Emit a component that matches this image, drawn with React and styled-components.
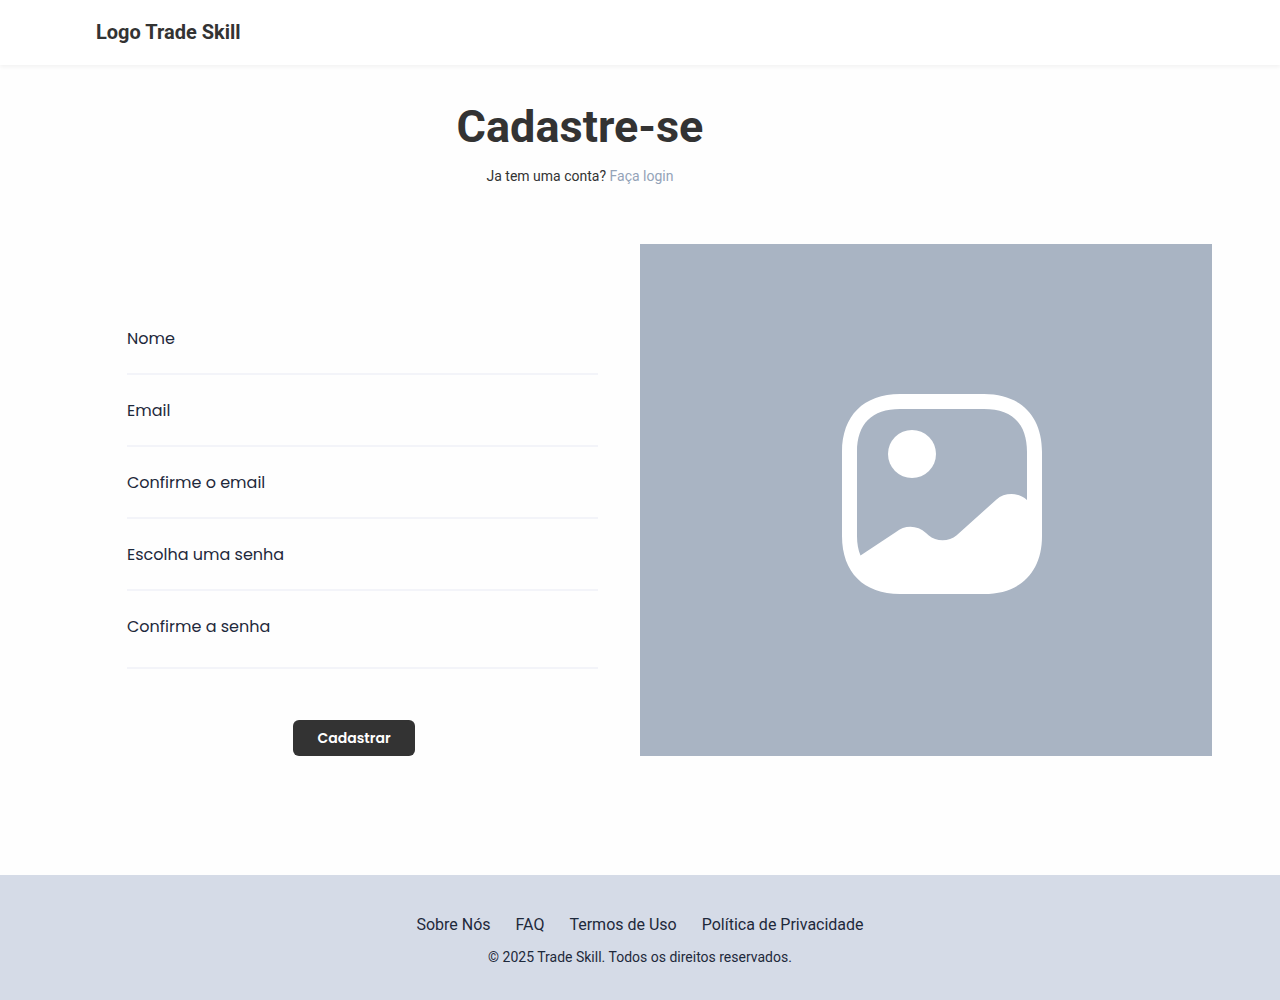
import React from "react";
import styled, { createGlobalStyle } from "styled-components";

const GlobalStyle = createGlobalStyle`
  *, *::before, *::after { box-sizing: border-box; }
  body {
    margin: 0;
    background: #fefefe;
    color: #333333;
    font-family: Roboto, "Liberation Sans", sans-serif;
  }
`;

const Page = styled.div`
  min-height: 100vh;
  display: flex;
  flex-direction: column;
`;

const Header = styled.header`
  padding: 20px 96px 21px;
  background: #ffffff;
  box-shadow: 0 2px 4px rgba(0, 0, 0, 0.05);
`;

const Logo = styled.a`
  display: block;
  color: #333333;
  font-size: 20px;
  font-weight: 700;
  line-height: 24px;
  text-decoration: none;
`;

const Main = styled.main`
  flex: 1;
  padding: 32px 68px 48px;
`;

const Intro = styled.div`
  padding-right: 120px;
  text-align: center;
`;

const Title = styled.h1`
  margin: 0;
  font-size: 45px;
  font-weight: 700;
  line-height: 60px;
`;

const Subtitle = styled.p`
  margin: 8px 0 0;
  font-size: 14px;
  line-height: 22px;
`;

const LoginLink = styled.a`
  color: #94a3b8;
  text-decoration: none;
`;

const Columns = styled.div`
  display: grid;
  grid-template-columns: 1fr 1fr;
  margin-top: 57px;
`;

const Form = styled.form`
  display: flex;
  flex-direction: column;
  justify-content: flex-end;
  align-items: center;
  gap: 51px;
  font-family: Poppins, Inter, "Liberation Sans", sans-serif;
`;

const Fields = styled.div`
  align-self: stretch;
  padding: 0 42px 0 59px;
`;

const FieldRow = styled.div`
  display: flex;
  gap: 12px;
  padding: 24px 0 22px;
  border-bottom: 2px solid #f3f4f9;

  &:last-child {
    padding-bottom: 28px;
  }
`;

const Label = styled.label`
  color: #1e293b;
  font-size: 16px;
  line-height: 24px;
`;

const Input = styled.input`
  flex: 1;
  min-width: 0;
  height: 24px;
  padding: 0;
  border: 0;
  outline: 0;
  background: transparent;
  color: #1e293b;
  font: inherit;
`;

const SubmitButton = styled.button`
  height: 36px;
  padding: 0 24px;
  border: 0;
  border-radius: 6px;
  background: #333333;
  color: #ffffff;
  font-family: inherit;
  font-size: 14px;
  font-weight: 600;
  cursor: pointer;
`;

const Placeholder = styled.div`
  display: flex;
  align-items: center;
  justify-content: center;
  height: 512px;
  padding: 0 0 12px 32px;
  background: #a9b4c3;
`;

const Footer = styled.footer`
  display: flex;
  flex-direction: column;
  align-items: center;
  gap: 9px;
  padding: 38px 24px 32px;
  background: #d5dbe7;
  color: #1e293b;
`;

const FooterNav = styled.nav`
  display: flex;
  flex-wrap: wrap;
  justify-content: center;
  gap: 0 25px;
`;

const FooterLink = styled.a`
  color: inherit;
  font-size: 16px;
  line-height: 24px;
  text-decoration: none;
`;

const Copyright = styled.p`
  margin: 0;
  font-size: 14px;
  line-height: 22px;
`;

function PictureIcon() {
  return (
    <svg width="200" height="200" viewBox="0 0 200 200" fill="#ffffff" aria-hidden="true">
      <path
        fillRule="evenodd"
        d="M58 0H142C178.300 0 200 21.700 200 58V142C200 178.300 178.300 200 142 200H58C21.700 200 0 178.300 0 142V58C0 21.700 21.700 0 58 0ZM58 15C29.800 15 15 29.800 15 58V142C15 149.500 16.200 156 18.500 161.500L54 138C62.500 131 75.500 131 84 139L86.500 141.200C94.300 148 106.900 148 114.700 141.200L154.500 105.500C162.500 98.200 177 98.200 185 106V58C185 29.800 170.200 15 142 15Z"
      />
      <circle cx="70" cy="60" r="24" />
    </svg>
  );
}

const fields = [
  { id: "nome", label: "Nome", type: "text" },
  { id: "email", label: "Email", type: "email" },
  { id: "confirme-email", label: "Confirme o email", type: "email" },
  { id: "senha", label: "Escolha uma senha", type: "password" },
  { id: "confirme-senha", label: "Confirme a senha", type: "password" },
];

const footerLinks = ["Sobre Nós", "FAQ", "Termos de Uso", "Política de Privacidade"];

export default function App() {
  return (
    <Page>
      <GlobalStyle />
      <Header>
        <Logo href="#">Logo Trade Skill</Logo>
      </Header>
      <Main>
        <Intro>
          <Title>Cadastre-se</Title>
          <Subtitle>
            Ja tem uma conta? <LoginLink href="#login">Faça login</LoginLink>
          </Subtitle>
        </Intro>
        <Columns>
          <Form onSubmit={(event) => event.preventDefault()}>
            <Fields>
              {fields.map((field) => (
                <FieldRow key={field.id}>
                  <Label htmlFor={field.id}>{field.label}</Label>
                  <Input id={field.id} name={field.id} type={field.type} />
                </FieldRow>
              ))}
            </Fields>
            <SubmitButton type="submit">Cadastrar</SubmitButton>
          </Form>
          <Placeholder>
            <PictureIcon />
          </Placeholder>
        </Columns>
      </Main>
      <Footer>
        <FooterNav>
          {footerLinks.map((text) => (
            <FooterLink key={text} href="#">
              {text}
            </FooterLink>
          ))}
        </FooterNav>
        <Copyright>© 2025 Trade Skill. Todos os direitos reservados.</Copyright>
      </Footer>
    </Page>
  );
}
